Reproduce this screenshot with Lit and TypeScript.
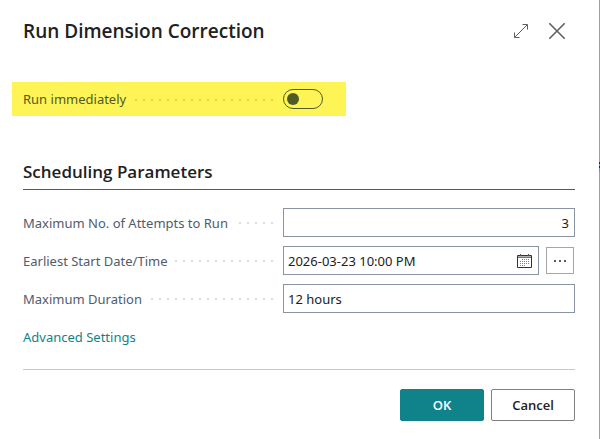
import { LitElement, html, css } from "lit";
import { customElement, property } from "lit/decorators.js";

@customElement("field-label")
class FieldLabel extends LitElement {
  @property() text = "";

  static styles = css`
    :host {
      display: flex;
      align-items: center;
      flex: 1;
      min-width: 0;
      white-space: nowrap;
    }
    .dots {
      flex: 1;
      height: 2px;
      margin: 1px 10px 0 7px;
      background: repeating-linear-gradient(to left, var(--dot, #dcdde0) 0 2px, transparent 2px 8px);
    }
  `;

  render() {
    return html`<span>${this.text}</span><span class="dots"></span>`;
  }
}

@customElement("app-root")
class AppRoot extends LitElement {
  static styles = css`
    :host {
      display: flex;
      min-height: 100vh;
      background: #fff;
      font: 13px/20px "Noto Sans", "Open Sans", sans-serif;
      color: #505c6d;
    }
    * {
      box-sizing: border-box;
    }
    .dialog {
      flex: 1;
      min-width: 0;
      padding: 16px 24px 16px 23px;
    }
    .edge {
      width: 1px;
      background: linear-gradient(#27303b, #27303b) 0 162px / 1px 2px no-repeat,
        linear-gradient(#27303b, #27303b) 0 166px / 1px 2px no-repeat,
        linear-gradient(#6f97a3, #6f97a3) 0 164px / 1px 8px no-repeat, #a0a0a0;
    }
    header {
      display: flex;
      align-items: center;
      height: 29px;
    }
    h1,
    h2 {
      margin: 0;
      color: #212121;
      font-family: "Open Sans", "Noto Sans", sans-serif;
      font-weight: 600;
    }
    h1 {
      flex: 1;
      font-size: 19px;
      line-height: 28px;
    }
    button {
      font: inherit;
      cursor: pointer;
    }
    .icon {
      display: flex;
      border: 0;
      padding: 0;
      background: none;
      color: #606060;
    }
    .expand {
      margin-right: 19px;
    }
    .close {
      margin-right: 9px;
    }
    .row {
      display: grid;
      grid-template-columns: 260fr 292fr;
    }
    .row label {
      display: flex;
      min-width: 0;
    }
    .highlight {
      margin-top: 37px;
      height: 34px;
      color: #505a26;
      --dot: #dcd64e;
    }
    .highlight label {
      margin-left: -11px;
      padding-left: 11px;
      background: #fff456;
    }
    .switch-cell {
      display: flex;
      align-items: center;
      width: 63px;
      background: #fff456;
    }
    .switch {
      appearance: none;
      display: flex;
      align-items: center;
      width: 40px;
      height: 20px;
      margin: 0;
      padding: 0 3px;
      border: 1px solid #505a26;
      border-radius: 10px;
      cursor: pointer;
    }
    .switch::before {
      content: "";
      width: 12px;
      height: 12px;
      border-radius: 50%;
      background: #505a26;
    }
    .switch:checked {
      justify-content: flex-end;
    }
    h2 {
      margin-top: 42px;
      padding-bottom: 3px;
      border-bottom: 1px solid #505c6d;
      font-size: 17px;
      line-height: 28px;
    }
    .fields {
      display: grid;
      gap: 9px;
      margin-top: 18px;
    }
    .control {
      display: flex;
      align-items: center;
      gap: 7px;
      min-width: 0;
    }
    .box {
      display: flex;
      align-items: center;
      flex: 1;
      min-width: 0;
      height: 29px;
      padding: 0 5px 0 4px;
      border: 1px solid #8a94a3;
    }
    .box input {
      flex: 1;
      min-width: 0;
      padding: 0;
      border: 0;
      outline: 0;
      background: none;
      font: inherit;
      color: #212121;
    }
    .number {
      text-align: right;
    }
    .more {
      display: flex;
      align-items: center;
      justify-content: center;
      width: 28px;
      height: 27px;
      margin-right: 1px;
      padding: 0;
      border: 1px solid #a6a6a6;
      background: #fff;
      color: #505c6d;
    }
    .link {
      display: inline-block;
      margin-top: 14px;
      color: #0f8387;
      text-decoration: none;
    }
    footer {
      display: flex;
      justify-content: flex-end;
      gap: 7px;
      margin-top: 22px;
      padding-top: 19px;
      border-top: 1px solid #c8c8c8;
    }
    .action {
      width: 84px;
      height: 32px;
      padding: 0;
      border: 1px solid #808080;
      border-radius: 2px;
      background: #fff;
      color: #212121;
      font-family: "Open Sans", "Noto Sans", sans-serif;
      font-weight: 600;
    }
    .primary {
      border-color: #10838a;
      background: #10838a;
      color: #fff;
    }
  `;

  render() {
    return html`
      <main class="dialog">
        <header>
          <h1>Run Dimension Correction</h1>
          <button class="icon expand" aria-label="Expand">
            <svg width="16" height="16" viewBox="0 0 16 16" fill="none" stroke="currentColor">
              <path d="M1.8 14.2 14.2 1.8M9.5 1.5h5v5M1.5 9.5v5h5" />
            </svg>
          </button>
          <button class="icon close" aria-label="Close">
            <svg width="18" height="18" viewBox="0 0 18 18" fill="none" stroke="currentColor" stroke-width="1.6">
              <path d="M1.3 1.3l15.4 15.4M16.7 1.3l-15.4 15.4" />
            </svg>
          </button>
        </header>

        <div class="row highlight">
          <label for="immediate"><field-label text="Run immediately"></field-label></label>
          <div class="switch-cell">
            <input class="switch" id="immediate" type="checkbox" role="switch" aria-label="Run immediately" />
          </div>
        </div>

        <h2>Scheduling Parameters</h2>
        <div class="fields">
          <div class="row">
            <label for="attempts"><field-label text="Maximum No. of Attempts to Run"></field-label></label>
            <div class="control">
              <div class="box">
                <input class="number" id="attempts" aria-label="Maximum No. of Attempts to Run" value="3" />
              </div>
            </div>
          </div>
          <div class="row">
            <label for="start"><field-label text="Earliest Start Date/Time"></field-label></label>
            <div class="control">
              <div class="box">
                <input id="start" aria-label="Earliest Start Date/Time" value="2026-03-23 10:00 PM" />
                <button class="icon" aria-label="Choose date">
                  <svg width="16" height="16" viewBox="0 0 16 16" fill="none">
                    <path d="M1 3.5h14" stroke="#b0b0b0" />
                    <path d="M1 4.5h14" stroke="#777" />
                    <path d="M.5 2.5h14v12H.5z" stroke="#333" />
                    <path d="M3.5 1v2M11.5 1v2" stroke="#555" />
                    <path
                      d="M5 6.5h8M3 8.5h10M3 10.5h10M3 12.5h6"
                      stroke="#7d8490"
                      stroke-dasharray="1 1"
                    />
                  </svg>
                </button>
              </div>
              <button class="more" aria-label="More options">
                <svg width="12" height="2" viewBox="0 0 12 2" fill="currentColor">
                  <path d="M0 0h2v2H0zM5 0h2v2H5zM10 0h2v2h-2z" />
                </svg>
              </button>
            </div>
          </div>
          <div class="row">
            <label for="duration"><field-label text="Maximum Duration"></field-label></label>
            <div class="control">
              <div class="box">
                <input id="duration" aria-label="Maximum Duration" value="12 hours" />
              </div>
            </div>
          </div>
        </div>
        <a class="link" href="#advanced">Advanced Settings</a>

        <footer>
          <button class="action primary">OK</button>
          <button class="action">Cancel</button>
        </footer>
      </main>
      <div class="edge"></div>
    `;
  }
}
